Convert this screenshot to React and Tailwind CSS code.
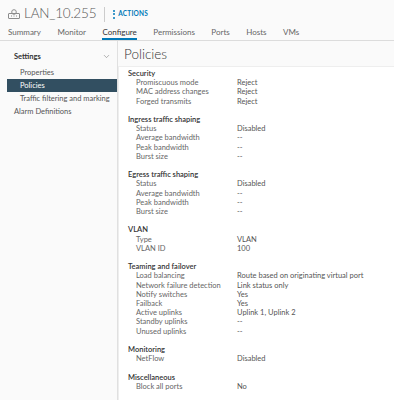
import { ChevronDown } from "lucide-react"

const sections = [
  {
    title: "Security",
    rows: [
      ["Promiscuous mode", "Reject"],
      ["MAC address changes", "Reject"],
      ["Forged transmits", "Reject"],
    ],
  },
  {
    title: "Ingress traffic shaping",
    rows: [
      ["Status", "Disabled"],
      ["Average bandwidth", "--"],
      ["Peak bandwidth", "--"],
      ["Burst size", "--"],
    ],
  },
  {
    title: "Egress traffic shaping",
    rows: [
      ["Status", "Disabled"],
      ["Average bandwidth", "--"],
      ["Peak bandwidth", "--"],
      ["Burst size", "--"],
    ],
  },
  {
    title: "VLAN",
    rows: [
      ["Type", "VLAN"],
      ["VLAN ID", "100"],
    ],
  },
  {
    title: "Teaming and failover",
    rows: [
      ["Load balancing", "Route based on originating virtual port"],
      ["Network failure detection", "Link status only"],
      ["Notify switches", "Yes"],
      ["Failback", "Yes"],
      ["Active uplinks", "Uplink 1, Uplink 2"],
      ["Standby uplinks", "--"],
      ["Unused uplinks", "--"],
    ],
  },
  {
    title: "Monitoring",
    rows: [["NetFlow", "Disabled"]],
  },
  {
    title: "Miscellaneous",
    rows: [["Block all ports", "No"]],
  },
]

const tabs = ["Summary", "Monitor", "Configure", "Permissions", "Ports", "Hosts", "VMs"]

function PortGroupIcon() {
  return (
    <svg viewBox="0 0 12 10" className="h-[10px] w-[12px]" fill="none" stroke="#8c8c8c" strokeWidth="1">
      <rect x="0.5" y="4.5" width="11" height="5" rx="0.5" />
      <circle cx="6" cy="3" r="2.3" />
      <path d="M3 7h1M5.5 7h1M8 7h1" />
    </svg>
  )
}

export default function App() {
  return (
    <div className="h-[400px] w-[394px] overflow-hidden bg-[#fafafa] font-['Lato',sans-serif] text-[#565656]">
      <div className="flex h-[26px] items-center pl-[8px] pt-[2px]">
        <PortGroupIcon />
        <span className="ml-[4px] text-[13.5px] font-light leading-none tracking-[-0.2px] text-[#565656]">LAN_10.255</span>
        <span className="ml-[8px] h-[15px] w-px bg-[#ccc]" />
        <span className="ml-[8px] flex items-center gap-[3px] text-[6.5px] font-bold tracking-[0.2px] text-[#0079b8]">
          <span className="flex flex-col gap-[1.5px]">
            <span className="h-[2px] w-[2px] rounded-full bg-[#0079b8]" />
            <span className="h-[2px] w-[2px] rounded-full bg-[#0079b8]" />
            <span className="h-[2px] w-[2px] rounded-full bg-[#0079b8]" />
          </span>
          ACTIONS
        </span>
      </div>

      <div className="flex h-[15px] gap-[16.5px] border-b border-[#dcdcdc] pl-[8px] text-[8px] leading-[13px]">
        {tabs.map((t) => (
          <span
            key={t}
            className={
              t === "Configure"
                ? "border-b-[2px] border-[#0079b8] text-[#333]"
                : "text-[#666]"
            }
          >
            {t}
          </span>
        ))}
      </div>

      <div className="flex h-[360px]">
        <div className="w-[118px] shrink-0 border-r border-[#e0e0e0] pt-[10px]">
          <div className="flex items-center justify-between pl-[14px] pr-[6px] text-[7.5px] font-bold text-[#333]">
            Settings
            <ChevronDown size={9} strokeWidth={1.5} className="text-[#777]" />
          </div>
          <div className="mt-[4px] pl-[20px] text-[7.5px] leading-[13px] text-[#555]">Properties</div>
          <div className="ml-[7px] bg-[#324f61] pl-[13px] text-[7.5px] leading-[13px] text-white">Policies</div>
          <div className="pl-[20px] text-[7.5px] leading-[13px] text-[#555]">Traffic filtering and marking</div>
          <div className="pl-[14px] text-[7.5px] leading-[13px] text-[#555]">Alarm Definitions</div>
        </div>

        <div className="flex min-w-0 flex-1 flex-col">
          <div className="h-[25px] pl-[6px] pt-[4px] text-[13.5px] font-light leading-[18px] text-[#333]">Policies</div>
          <div className="flex-1 border-l border-t border-[#eeeeee] bg-white pl-[9px] pt-[2px] text-[7.5px] leading-[9.2px]">
            {sections.map((s) => (
              <div key={s.title} className="mb-[9.2px]">
                <div className="font-semibold text-[#333]">{s.title}</div>
                {s.rows.map(([k, v]) => (
                  <div key={k} className="flex">
                    <span className="w-[109px] shrink-0 pl-[8px] text-[#666]">{k}</span>
                    <span className="text-[#555]">{v}</span>
                  </div>
                ))}
              </div>
            ))}
          </div>
        </div>
      </div>
    </div>
  )
}
